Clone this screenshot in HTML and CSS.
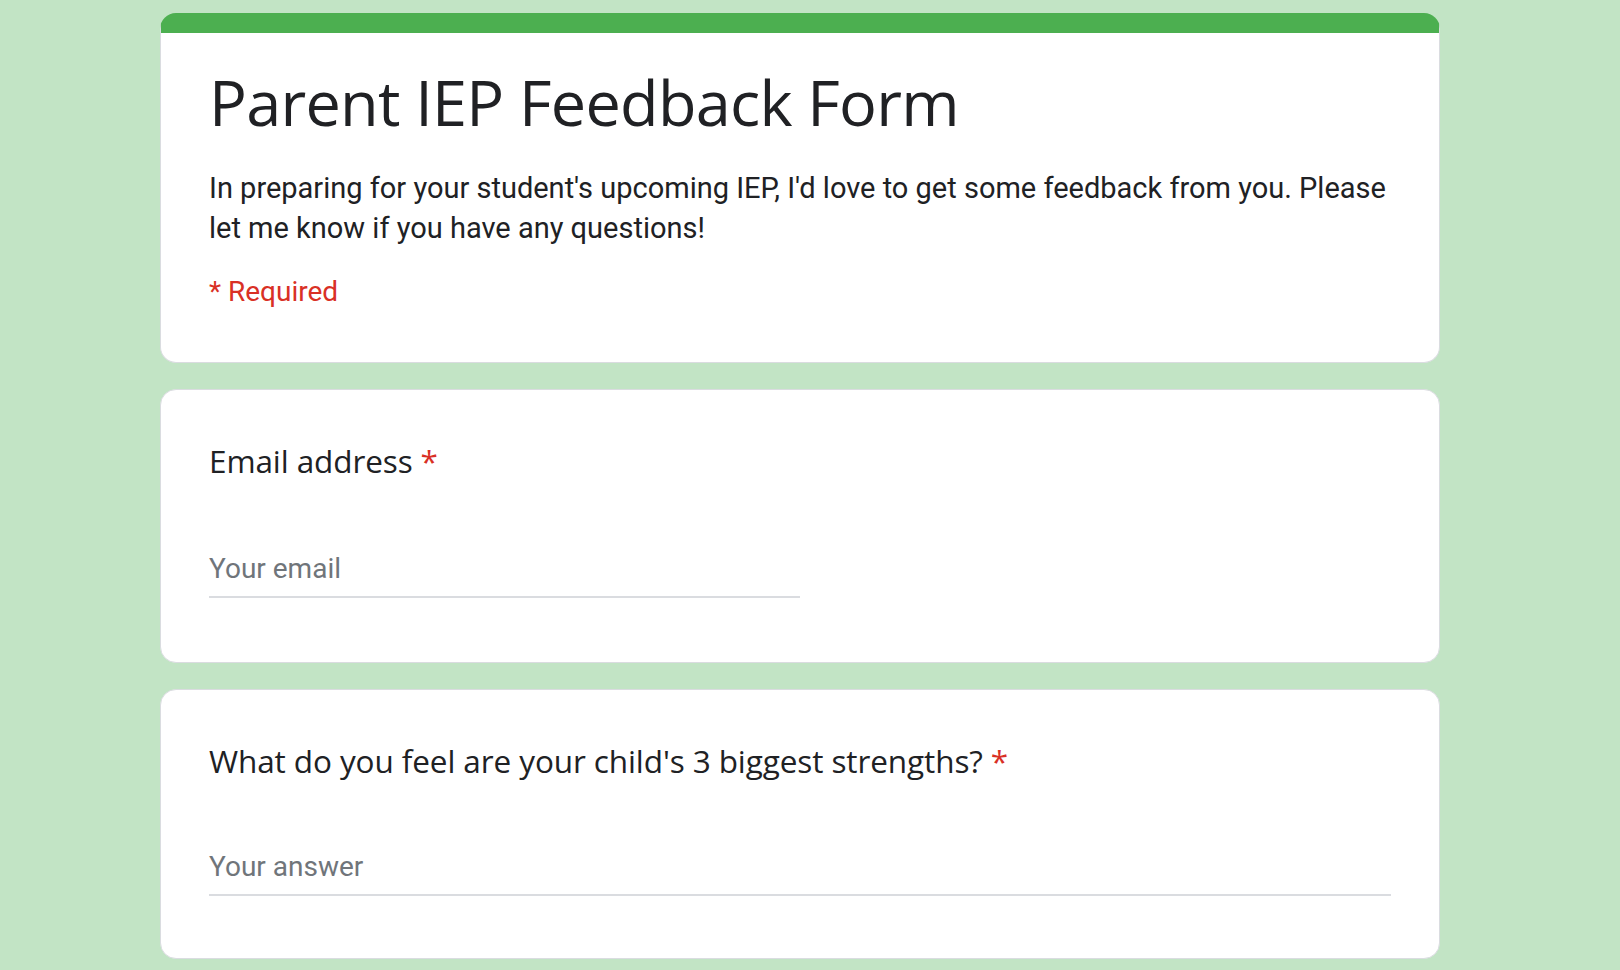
FILE: index.html
```html
<!DOCTYPE html>
<html lang="en">
<head>
<meta charset="utf-8">
<title>Parent IEP Feedback Form</title>
<link rel="stylesheet" href="styles.css">
</head>
<body>
<main class="form">
  <section class="card card-header">
    <h1 class="form-title">Parent IEP Feedback Form</h1>
    <p class="form-desc">In preparing for your student's upcoming IEP, I'd love to get some feedback from you. Please let me know if you have any questions!</p>
    <div class="required-note">* Required</div>
  </section>

  <section class="card question">
    <div class="q-title">Email address<span class="star">*</span></div>
    <div class="answer answer-half answer-email">
      <span class="placeholder">Your email</span>
    </div>
  </section>

  <section class="card question">
    <div class="q-title">What do you feel are your child's 3 biggest strengths?<span class="star">*</span></div>
    <div class="answer answer-full">
      <span class="placeholder">Your answer</span>
    </div>
  </section>
</main>
</body>
</html>
```

FILE: styles.css
```css
html, body {
  margin: 0;
  padding: 0;
}

body {
  background: #c2e4c5;
  font-family: Roboto, "Liberation Sans", Arial, sans-serif;
  color: #202124;
  min-height: 970px;
}

.form {
  width: 1280px;
  margin: 13px 0 0 160px;
  display: flex;
  flex-direction: column;
  gap: 26px;
}

.card {
  background: #ffffff;
  border: 1px solid #dadce0;
  border-radius: 16px;
  box-sizing: border-box;
}

.card-header {
  border-top: 20px solid #4caf50;
  padding: 29px 48px 50px;
}

.form-title {
  margin: 0;
  font-family: "Open Sans", Roboto, sans-serif;
  font-weight: 400;
  font-size: 63px;
  letter-spacing: -0.75px;
  line-height: 80px;
  color: #202124;
}

.form-desc {
  margin: 26px 0 0;
  font-size: 29px;
  line-height: 40px;
  color: #202124;
}

.required-note {
  margin-top: 24px;
  font-size: 28px;
  line-height: 40px;
  color: #d93025;
}

.question {
  padding: 51px 48px 62px;
}

.question:nth-of-type(2) {
  padding-bottom: 64px;
}

.q-title {
  font-family: "Open Sans", Roboto, sans-serif;
  font-size: 31.5px;
  letter-spacing: -0.1px;
  line-height: 40px;
  color: #202124;
}

.star {
  color: #d93025;
  padding-left: 8px;
}

.answer {
  margin-top: 66px;
  padding-bottom: 7px;
  border-bottom: 2px solid #dadce0;
}

.answer-email {
  margin-top: 68px;
}

.answer-half {
  width: 50%;
}

.answer-full {
  width: 100%;
}

.placeholder {
  display: block;
  font-size: 28px;
  line-height: 40px;
  color: #70757a;
}
```
